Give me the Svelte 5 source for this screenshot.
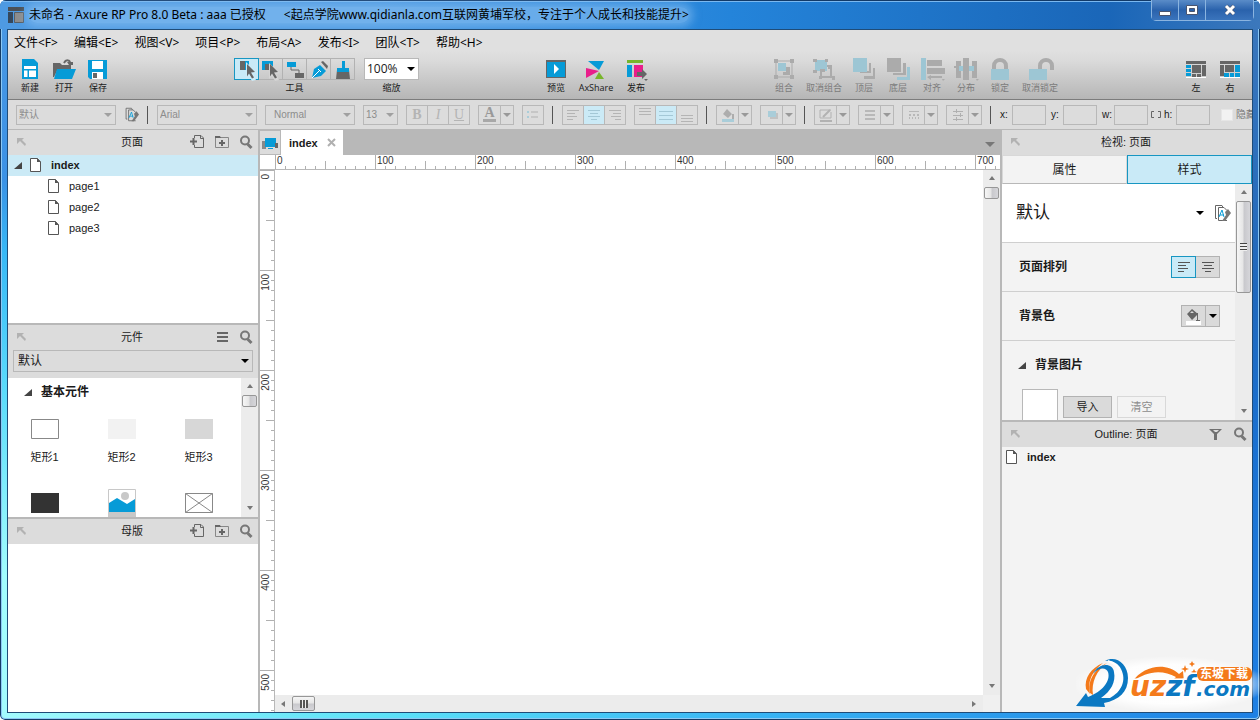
<script lang="ts">
	type Shape = [color: string, d: string, stroke?: number];

	const BLUE = '#069bd7';
	const DARK = '#666666';
	const GREY = '#ababab';
	const PALE = '#9dc6d4';
	const SOFT = '#a9cdd9';

	const icons: Record<string, Shape[]> = {
		new: [
			[BLUE, 'M4 1h12l4 4v16H4z'],
			['#fff', 'M6 8h12v3H6zM6 12.500h3.500v6.500H6zM11 12.500h7v6.500h-7z']
		],
		open: [
			[DARK, 'M1 5h7l2 2h9v4H6L2 19H1z'],
			[BLUE, 'M5 11h19l-4 10H2z'],
			[DARK, 'M12 5c2-4 6-3 6 0', 2],
			[DARK, 'M15 4h6v3h-4z']
		],
		save: [
			[BLUE, 'M2 2h19v19H4l-2-2z'],
			['#fff', 'M6 3h11v8H6zM6 14h11v7H6z'],
			[DARK, 'M7 15h4v5H7z']
		],
		select: [
			[DARK, 'M4 2h5v9H4z'],
			[BLUE, 'M9 2h4v9H9z'],
			['#cdebf7', 'M10 3l11 11-4 1 3 6-4 1-3-5-3 3z'],
			[DARK, 'M11 5l8 8-4 .5 3 5-2 1-3-5-2 3z']
		],
		contain: [
			[BLUE, 'M2 2h11v9H2z'],
			[DARK, 'M5 5h6v6H5z'],
			['#d4d4d4', 'M9 4l11 10-4 1 3 6-4 1-3-5-3 3z'],
			[DARK, 'M10 5l8 8-4 .5 3 5-2 1-3-5-2 3z']
		],
		connect: [
			[BLUE, 'M3 3h9v5H3z'],
			[DARK, 'M11 14h9v5h-9z'],
			[DARK, 'M7 8v3h8v3', 1]
		],
		pen: [
			[BLUE, 'M4 19l2-9 6-4 6 6-5 5z'],
			[DARK, 'M13 3l2-1 5 5-1 3z'],
			['#fff', 'M4 19l7-7M10 10l3 3', 1]
		],
		brush: [
			[DARK, 'M5 11h12l1 9H4z'],
			[BLUE, 'M10 2h3v7h4v4H5V9h5z']
		],
		preview: [
			[DARK, 'M2 2h20v18H2z'],
			[BLUE, 'M3 4h18v15H3z'],
			['#fff', 'M10 6l5 5-5 5z']
		],
		axshare: [
			[BLUE, 'M4 3h16l-5 9z'],
			['#e91e8b', 'M2 10l13 3L2 20z'],
			['#77b52b', 'M15 14l5 7h-9z']
		],
		publish: [
			['#77b52b', 'M3 2h16v3H3z'],
			[BLUE, 'M3 7h5v12H3z'],
			['#e91e8b', 'M10 7h9v12h-9z'],
			[DARK, 'M13 14h5v-3l5 5-5 5v-3h-5zM20 21h4l-2 2z']
		],
		group: [
			[GREY, 'M4 3h16v16H4z', 1],
			[GREY, 'M2 1h4v4H2zM18 1h4v4h-4zM2 17h4v4H2zM18 17h4v4h-4zM11 14h3v-5h4v8h-7z'],
			[PALE, 'M6 5h8v8H6z']
		],
		ungroup: [
			[PALE, 'M3 2h12v11H3z'],
			[GREY, 'M1 1h4v3H1zM13 1h3v3h-3zM1 12h4v3H1zM16 7h3v4h-3zM7 18h3v3H7zM20 18h3v4h-3zM8 11h5v3H8z'],
			[GREY, 'M15 8h4v11H9v-5', 2]
		],
		front: [
			[GREY, 'M17 5h2v10H8v-2h9zM21 10h2v11H12v-3h9z'],
			[PALE, 'M1 0h14v14H1z']
		],
		back: [
			[PALE, 'M21 9h3v13H11v-3h10z'],
			[GREY, 'M1 0h14v14H1zM17 5h3v12H7v-2h10z']
		],
		align: [
			[PALE, 'M1 0h5v22H1z'],
			[GREY, 'M7 2h15v6H7zM7 10h18v6H7zM7 19l4-2v1h11v2H11v2zM22 21h3l-2 2z']
		],
		distribute: [
			[GREY, 'M2 3h5v17H2zM9 0h6v22H9zM18 3h5v17h-5zM0 8h3v2H0zM22 21h3l-2 2z'],
			[PALE, 'M5 8h15v5H5z'],
			[GREY, 'M9 8h6v5H9z']
		],
		lock: [
			[GREY, 'M6 11V8c0-8 12-8 12 0v3', 4],
			[PALE, 'M3 11h18v11H3z']
		],
		unlock: [
			[GREY, 'M12 11V8c0-8 12-8 12 0v4', 4],
			[PALE, 'M1 11h18v11H1z']
		],
		paneLeft: [
			[DARK, 'M2 3h20v3H2zM8 7h9v8H8zM18 7h4v11h-4zM8 16h4v3H8zM13 16h4v3h-4z'],
			[BLUE, 'M2 7h5v3H2zM2 11h5v3H2zM2 15h5v3H2z'],
			['#fff', 'M2 19h20v1H2z']
		],
		paneRight: [
			[DARK, 'M2 3h20v3H2zM2 7h4v11H2zM7 7h9v7H7z'],
			[BLUE, 'M17 7h5v7h-5zM6 15h5v4H6zM12 15h4v4h-4zM17 15h5v4h-5z'],
			['#fff', 'M2 19h20v1H2z']
		],
		format: [
			[DARK, 'M4 14.500H2.500v-13H9l1 2', 1],
			[DARK, 'M14 16.500H5.500v-13H11l3 3', 1],
			['#777', 'M12 8l3-3 3 4-6 8h-3l4-6z'],
			[BLUE, 'M6 13l3-7 2 7M7 11h4', 1]
		],
		corner: [['#b2b2b2', 'M2 3h7L7 5l4 4-1 2-5-5-3 3z']],
		addPage: [
			[DARK, 'M4.500 4V1.500H11L13.500 4v9.500h-9V11', 1],
			[DARK, 'M10.500 2v2.500h3', 1],
			[DARK, 'M0 7.500h7M3.500 4v7', 2]
		],
		addFolder: [
			['#888', 'M1.500 3.500h13v10h-13z', 1],
			[DARK, 'M1 2h5l1 2H1zM7 6h2v2h2v2H9v2H7v-2H5V8h2z']
		],
		search: [
			['#777', 'M11 6.500a4 4 0 1 1-8 0a4 4 0 1 1 8 0z', 2],
			['#777', 'M9.500 10l4 4', 3]
		],
		menu: [['#666', 'M3 3h11v2H3zM3 7h11v2H3zM3 11h11v2H3z']],
		filter: [['#707070', 'M1 3h13L9 8v6H6V8zM5 4l2 2h2l2-2z']],
		page: [
			['#fff', 'M2 1h7l3 4v10H2z'],
			['#555', 'M1.500 1.500h7l3 3.500v9.500h-10z', 1],
			['#555', 'M8 1l4 4H8z']
		],
		fold: [['#444', 'M8 2v7H0z']],
		device: [
			['#888', 'M1 5h4v8H1z'],
			[BLUE, 'M4 2h11v9H4zM7 12h5v1H7z'],
			[DARK, 'M14 7h3v5h-3z']
		],
		list: [
			[SOFT, 'M2 4h2v2H2zM2 9h2v2H2z'],
			['#b0b0b0', 'M6 5h7M6 10h7', 1]
		],
		link: [['#666', 'M3 1.500H.500v6H3M7 1.500h2.500v6H7', 1]],
		left: [['currentColor', 'M2 3.500h12M2 6.500h8M2 9.500h10M2 12.500h6', 1]],
		center: [['currentColor', 'M2 3.500h12M4 6.500h8M2 9.500h12M5 12.500h6', 1]],
		right: [['currentColor', 'M2 3.500h12M6 6.500h8M4 9.500h10M8 12.500h6', 1]],
		top: [['currentColor', 'M2 1.500h12M2 4.500h12M2 7.500h12', 1]],
		middle: [['currentColor', 'M1 4.500h14M1 8.500h14M1 12.500h14', 1]],
		bottom: [['currentColor', 'M2 8.500h12M2 11.500h12M2 14.500h12', 1]],
		fill: [
			['#adadad', 'M3 7l4-5 5 5-4 4zM12 7h2v5h-2z'],
			[SOFT, 'M2 12h12v3H2z']
		],
		bucket: [
			[DARK, 'M2 6l5-5 6 5-6 6zM12 5h1v7h2v1h-4v-1h1z'],
			['#dadada', 'M5 5l2-2 2 2z'],
			['#fff', 'M1 13h15v4H1z']
		],
		shadow: [
			['#c2c2c2', 'M6 6h8v6H6z'],
			[SOFT, 'M4 4h8v6H4z']
		],
		line: [
			['#b2b2b2', 'M2 3h11M2 3v8h11V5', 1],
			['#b2b2b2', 'M5 10l7-7M2 14h12', 2]
		],
		weight: [['#b8b8b8', 'M3 4h10M3 8h10M3 12h10', 2]],
		dash: [
			['#b8b8b8', 'M3 4.500h10', 1],
			['#b8b8b8', 'M3 8h2M7 8h2M11 8h2M3 11h1M6 11h1M9 11h1M12 11h1', 2]
		],
		arrows: [['#b0b0b0', 'M3 4.500h10M3 8.500h10M3 12.500h10M6.500 2v4M10.500 6v4M6.500 10v4', 1]]
	};

	const menus = ['文件<F>', '编辑<E>', '视图<V>', '项目<P>', '布局<A>', '发布<I>', '团队<T>', '帮助<H>'];
	const fileTools = [
		['new', '新建'],
		['open', '打开'],
		['save', '保存']
	];
	const pointers = ['select', 'contain', 'connect', 'pen', 'brush'];
	const publishTools = [
		['preview', '预览'],
		['axshare', 'AxShare'],
		['publish', '发布']
	];
	const arrangeTools = [
		['group', '组合'],
		['ungroup', '取消组合'],
		['front', '顶层'],
		['back', '底层'],
		['align', '对齐'],
		['distribute', '分布'],
		['lock', '锁定'],
		['unlock', '取消锁定']
	];
	const paneTools = [
		['paneLeft', '左'],
		['paneRight', '右']
	];
	const widgets = [
		['box', '矩形1'],
		['light', '矩形2'],
		['mid', '矩形3'],
		['dark', ''],
		['image', ''],
		['placeholder', '']
	];

	let pointer = $state('select');
	let selected = $state('index');
	let inspectorTab = $state('样式');
	let pageAlign = $state('left');

	// rulers only carry as many ticks as the canvas has room for
	let rulerWidth = $state(0);
	let rulerHeight = $state(0);
	let ticksX = $derived(Array.from({ length: Math.ceil(rulerWidth / 10) }, (_, i) => i));
	let ticksY = $derived(Array.from({ length: Math.ceil(rulerHeight / 10) }, (_, i) => i));

	function tickLength(i: number) {
		if (i % 10 === 0) return 15;
		return i % 5 === 0 ? 9 : 4;
	}
</script>

{#snippet icon(name: string, w = 16, h = 16)}
	<svg width={w} height={h} viewBox="0 0 {w} {h}" aria-hidden="true">
		{#each icons[name] as [color, d, stroke]}
			{#if stroke}
				<path {d} fill="none" stroke={color} stroke-width={stroke} />
			{:else}
				<path {d} fill={color} />
			{/if}
		{/each}
	</svg>
{/snippet}

{#snippet tool([name, label]: string[], disabled = false)}
	<button class="tool" class:wide={label.length === 4} {disabled}>
		{@render icon(name, 24, 22)}
		<span>{label}</span>
	</button>
{/snippet}

{#snippet dropdown(value: string, size: string, label: string, disabled = false)}
	<span class="dropdown {size}" class:disabled>
		<select aria-label={label} {disabled}><option>{value}</option></select>
	</span>
{/snippet}

{#snippet split(name: string, label: string)}
	<span class="joined">
		<button class="cell main" aria-label={label} disabled>{@render icon(name)}</button>
		<button class="cell more" aria-label="{label}选项" disabled><i class="caret"></i></button>
	</span>
{/snippet}

{#snippet panelHeader(title: string, actions: string[])}
	<header class="panel-header">
		<button class="plain" aria-label="停靠">{@render icon('corner', 14, 14)}</button>
		<h2>{title}</h2>
		<div class="actions">
			{#each actions as action}
				<button class="plain" aria-label={action}>{@render icon(action)}</button>
			{/each}
		</div>
	</header>
{/snippet}

{#snippet scrollbar(thumb: string, horizontal = false)}
	<div class="scrollbar" class:horizontal>
		<i class="arrow back"></i>
		<i class="thumb {thumb}">{#if thumb !== 'short'}<b></b>{/if}</i>
		<i class="arrow forward"></i>
	</div>
{/snippet}

<div class="window">
	<div class="titlebar">
		<svg width="16" height="16" viewBox="0 0 16 16" aria-hidden="true">
			<path fill="#4b5056" d="M0 0h16v4H0z" />
			<path fill="#35485c" d="M0 5h5v11H0z" />
			<path fill="#8d8d8d" stroke="#5b5f63" d="M6.500 5.500h9v10h-9z" />
		</svg>
		<h1>
			<span>未命名 - Axure RP Pro 8.0 Beta : aaa 已授权</span>
			<span>&lt;起点学院www.qidianla.com互联网黄埔军校，专注于个人成长和技能提升&gt;</span>
		</h1>
		<div class="controls">
			<button aria-label="最小化"><svg width="12" height="12" viewBox="0 0 12 12"><path fill="#fff" stroke="#4a5570" d="M.5 7.500h11v4H.5z" /></svg></button>
			<button aria-label="最大化"><svg width="12" height="12" viewBox="0 0 12 12"><path fill="#fff" fill-rule="evenodd" stroke="#4a5570" d="M.5 1.500h11v9H.5zM3.500 4.500h5v3h-5z" /></svg></button>
			<button class="close" aria-label="关闭"><svg width="12" height="12" viewBox="0 0 12 12"><path stroke="#4a5570" stroke-width="4" d="M2 2l8 8M10 2l-8 8" /><path stroke="#fff" stroke-width="3" d="M2 2l8 8M10 2l-8 8" /></svg></button>
		</div>
	</div>

	<div class="client">
		<div class="top">
			<nav class="menubar">
				{#each menus as menu}
					<button class="plain">{menu}</button>
				{/each}
			</nav>
			<div class="toolbar">
				<div class="tools">
					{#each fileTools as item}{@render tool(item)}{/each}
				</div>
				<div class="labelled pointers">
					<div class="joined">
						{#each pointers as name}
							<button class="pointer" class:active={pointer === name} aria-label={name} onclick={() => (pointer = name)}>
								{@render icon(name, 22, 22)}
							</button>
						{/each}
					</div>
					<span>工具</span>
				</div>
				<div class="labelled zoom">
					{@render dropdown('100%', 'small', '缩放')}
					<span>缩放</span>
				</div>
				<div class="tools publish">
					{#each publishTools as item}{@render tool(item)}{/each}
				</div>
				<div class="tools arrange">
					{#each arrangeTools as item}{@render tool(item, true)}{/each}
				</div>
				<div class="tools panes">
					{#each paneTools as item}{@render tool(item)}{/each}
				</div>
			</div>
		</div>

		<div class="stylebar">
			{@render dropdown('默认', 'large', '样式', true)}
			<button class="plain" aria-label="样式管理">{@render icon('format', 18, 18)}</button>
			<i class="separator"></i>
			{@render dropdown('Arial', 'large', '字体', true)}
			{@render dropdown('Normal', 'medium', '字形', true)}
			{@render dropdown('13', 'tiny', '字号', true)}
			<span class="joined letters">
				<button class="cell" disabled><b>B</b></button>
				<button class="cell" disabled><em>I</em></button>
				<button class="cell" disabled><u>U</u></button>
			</span>
			<span class="joined letters">
				<button class="cell main color" aria-label="文字颜色" disabled><b>A</b></button>
				<button class="cell more" aria-label="颜色选项" disabled><i class="caret"></i></button>
			</span>
			<button class="cell" aria-label="项目符号" disabled>{@render icon('list')}</button>
			<i class="separator"></i>
			<span class="joined">
				{#each ['left', 'center', 'right'] as name}
					<button class="cell" class:on={name === 'center'} aria-label={name} disabled>{@render icon(name)}</button>
				{/each}
			</span>
			<span class="joined">
				{#each ['top', 'middle', 'bottom'] as name}
					<button class="cell" class:on={name === 'middle'} aria-label={name} disabled>{@render icon(name)}</button>
				{/each}
			</span>
			<i class="separator"></i>
			{@render split('fill', '填充')}
			{@render split('shadow', '阴影')}
			<i class="separator"></i>
			{@render split('line', '线条颜色')}
			{@render split('weight', '线宽')}
			{@render split('dash', '线型')}
			{@render split('arrows', '箭头')}
			<i class="separator"></i>
			<div class="coords">
				<label>x:<input disabled /></label>
				<label>y:<input disabled /></label>
				<label>w:<input disabled /></label>
				<span class="link">{@render icon('link', 10, 9)}</span>
				<label>h:<input disabled /></label>
			</div>
			<label class="hide"><input type="checkbox" disabled />隐藏</label>
		</div>

		<div class="workspace">
			<aside class="side">
				<section class="pages">
					{@render panelHeader('页面', ['addPage', 'addFolder', 'search'])}
					<button class="row root" class:selected={selected === 'index'} onclick={() => (selected = 'index')}>
						{@render icon('fold', 9, 10)}
						{@render icon('page', 13)}
						<span>index</span>
					</button>
					{#each ['page1', 'page2', 'page3'] as page}
						<button class="row child" class:selected={selected === page} onclick={() => (selected = page)}>
							{@render icon('page', 13)}
							<span>{page}</span>
						</button>
					{/each}
				</section>

				<section class="library">
					{@render panelHeader('元件', ['menu', 'search'])}
					<div class="library-select">{@render dropdown('默认', 'full', '元件库')}</div>
					<div class="scroll-area">
						<div class="library-content">
							<h3>{@render icon('fold', 9, 10)}基本元件</h3>
							<div class="widgets">
								{#each widgets as [kind, label]}
									<div class="widget">
										<svg width="28" height="30" viewBox="0 0 28 30" aria-hidden="true">
											{#if kind === 'box'}
												<path fill="#fff" stroke="#888" d="M.5 5.500h27v19H.5z" />
											{:else if kind === 'light'}
												<path fill="#f2f2f2" d="M0 5h28v20H0z" />
											{:else if kind === 'mid'}
												<path fill="#d7d7d7" d="M0 5h28v20H0z" />
											{:else if kind === 'dark'}
												<path fill="#333" d="M0 5h28v20H0z" />
											{:else if kind === 'image'}
												<path fill="#fff" stroke="#c8c8c8" d="M.5 1.500h27v28H.5z" />
												<path fill="#c8c8c8" d="M0 24h28v6H0z" />
												<circle cx="17" cy="8" r="4" fill="#c8c8c8" />
												<path fill={BLUE} d="M1 15l8-5 10 6 8-5v13H1z" />
											{:else}
												<path fill="#fff" stroke="#888" d="M.5 5.500h27v19H.5zM.5 5.500l27 19M27.500 5.500l-27 19" />
											{/if}
										</svg>
										{#if label}<span>{label}</span>{/if}
									</div>
								{/each}
							</div>
						</div>
						{@render scrollbar('short')}
					</div>
				</section>

				<section class="masters">
					{@render panelHeader('母版', ['addPage', 'addFolder', 'search'])}
				</section>
			</aside>

			<main class="editor">
				<div class="tabs">
					<button class="device" aria-label="自适应视图">{@render icon('device', 18, 14)}</button>
					<div class="tab">
						<span>index</span>
						<button class="plain" aria-label="关闭标签">
							<svg width="9" height="9" viewBox="0 0 9 9"><path stroke="#b0b0b0" stroke-width="2" d="M1 1l7 7M8 1L1 8" /></svg>
						</button>
					</div>
					<button class="plain tab-list" aria-label="标签列表"><i class="caret"></i></button>
				</div>
				<div class="canvas-grid">
					<div class="ruler-corner"></div>
					<div class="ruler-x" bind:clientWidth={rulerWidth}>
						<svg aria-hidden="true">
							{#each ticksX as i}
								<line x1={i * 10 + 0.5} x2={i * 10 + 0.5} y1={15 - tickLength(i)} y2="15" />
								{#if i % 10 === 0}<text x={i * 10 + 2} y="9">{i * 10}</text>{/if}
							{/each}
						</svg>
					</div>
					<div class="ruler-y" bind:clientHeight={rulerHeight}>
						<svg aria-hidden="true">
							{#each ticksY as i}
								<line y1={i * 10 + 0.5} y2={i * 10 + 0.5} x1={15 - tickLength(i)} x2="15" />
								{#if i % 10 === 0}
									<text text-anchor="end" transform="translate(9 {i * 10 + 4}) rotate(-90)">{i * 10}</text>
								{/if}
							{/each}
						</svg>
					</div>
					<div class="canvas"></div>
					{@render scrollbar('short')}
					<div class="bottom-scroll">{@render scrollbar('grip', true)}</div>
				</div>
			</main>

			<aside class="side inspector">
				<section class="inspect">
					{@render panelHeader('检视: 页面', [])}
					<div class="inspect-tabs">
						{#each ['属性', '样式'] as name}
							<button class:active={inspectorTab === name} onclick={() => (inspectorTab = name)}>{name}</button>
						{/each}
					</div>
					<div class="scroll-area">
						<div class="inspect-content">
							<div class="field preset">
								{@render dropdown('默认', 'title', '页面样式')}
								<button class="plain" aria-label="样式管理">{@render icon('format', 18, 18)}</button>
							</div>
							<div class="field">
								<h3>页面排列</h3>
								<span class="joined">
									{#each ['left', 'center'] as name}
										<button class="pointer" class:active={pageAlign === name} aria-label={name} onclick={() => (pageAlign = name)}>
											{@render icon(name)}
										</button>
									{/each}
								</span>
							</div>
							<div class="field">
								<h3>背景色</h3>
								<span class="joined">
									<button class="pointer" aria-label="背景色">{@render icon('bucket', 17, 17)}</button>
									<button class="pointer narrow" aria-label="颜色选项"><i class="caret black"></i></button>
								</span>
							</div>
							<div class="field last">
								<h3>{@render icon('fold', 9, 10)}背景图片</h3>
							</div>
							<div class="picture">
								<div class="thumbnail"></div>
								<button class="push">导入</button>
								<button class="push" disabled>清空</button>
							</div>
						</div>
						{@render scrollbar('long')}
					</div>
				</section>
				<section class="outline">
					{@render panelHeader('Outline: 页面', ['filter', 'search'])}
					<button class="row">{@render icon('page', 13)}<span>index</span></button>
				</section>
			</aside>
		</div>
	</div>

	<svg class="watermark" width="184" height="60" viewBox="0 0 184 60" role="img" aria-label="uzzf.com 东坡下载">
		<defs>
			<radialGradient id="halo">
				<stop offset="70%" stop-color="#fff" stop-opacity="0.9" />
				<stop offset="100%" stop-color="#fff" stop-opacity="0" />
			</radialGradient>
		</defs>
		<ellipse cx="94" cy="30" rx="98" ry="28" fill="url(#halo)" />
		<path fill="#f47a1b" d="M27 9C15 14 8 24 10 35l4 5C11 28 16 17 27 9z" />
		<path fill="#f47a1b" d="M31 9C21 16 15 28 17 41l-3-2C11 28 18 15 31 9z" />
		<path fill="#0b78c2" d="M17 20C23 8 37 9 38 18c2 10-3 19-13 26h9c11-6 17-17 11-29-3-6-9-9-16-8C39 1 52 9 52 24c0 14-9 22-24 25l1 4L0 52l10-13 2 4C26 38 35 27 32 18c-2-5-9-5-15 2z" />
		<path fill="none" stroke="#fff" stroke-width="2" d="M32 7c14 4 17 18 9 30" />
		<path fill="#f47a1b" d="M56 28c12-17 34-20 47-8l4-3 1 11-12-1 4-4C86 15 70 17 56 28z" />
		<path fill="#f47a1b" d="M109 11l1 3 3 1-3 1-1 3-1-3-3-1 3-1zM116 7l1 2 2 1-2 1-1 2-1-2-2-1 2-1zM118 15l1 2 2 1-2 1-1 2-1-2-2-1 2-1z" />
		<text class="brand orange" x="54" y="42">uz</text>
		<text class="brand blue" x="90" y="42">zf</text>
		<text class="brand blue small" x="120" y="42">.com</text>
		<rect x="121" y="13" width="55" height="14" rx="6" fill="#f47a1b" />
		<text class="tagline" x="124" y="24">东坡下载</text>
	</svg>
</div>

<style>
	:global(body) {
		margin: 0;
		font: 11px/14px 'Liberation Sans', 'Noto Sans CJK SC', sans-serif;
		color: #1a1a1a;
	}

	.window {
		position: relative;
		display: flex;
		flex-direction: column;
		min-height: 100vh;
		overflow: hidden;
		border-radius: 6px 6px 5px 5px;
		background:
			linear-gradient(90deg, #a4fbfd, #5ce2f8 30%, #37b4f4 60%, #1e80e4) bottom / 100% 8px no-repeat,
			linear-gradient(#4b98e2, #3b92e6 25%, #38b8f6 35%, #5cdcfb 55%, #a2fdfd 80%, #a4fbfd) left / 50% 100% no-repeat,
			linear-gradient(#3c78bc, #2068bc 40%, #1a70d0 60%, #1e80e4) right / 50% 100% no-repeat;
		box-shadow: inset 0 0 0 1px #143c66, inset 0 0 0 2px #8cc8f4;
	}

	button,
	select,
	input {
		font: inherit;
		color: inherit;
		margin: 0;
		padding: 0;
		border-radius: 0;
		box-sizing: border-box;
	}

	h1,
	h2,
	h3 {
		margin: 0;
		font-size: 11px;
		font-weight: normal;
	}

	svg {
		display: block;
		flex-shrink: 0;
	}

	.plain {
		border: 0;
		background: none;
	}

	.titlebar {
		display: flex;
		align-items: center;
		height: 29px;
		padding: 0 6px 0 8px;
		background: linear-gradient(90deg, #4e9ae2, #4c9ae2 30%, #2484da 58%, #1a66b8 88%, #3c78bc);
		box-shadow: inset 0 1px #123a68, inset 0 2px #7ab8f0;
	}

	h1 {
		display: flex;
		gap: 18px;
		margin-left: 5px;
		font: 12px/16px 'Noto Sans', 'Noto Sans CJK SC', sans-serif;
		color: #000;
		white-space: nowrap;
		background: rgba(150, 200, 245, 0.5);
		box-shadow: 0 0 8px 4px rgba(150, 200, 245, 0.5);
		border-radius: 8px;
	}

	.controls {
		display: flex;
		align-self: flex-start;
		margin-left: auto;
		border: 1px solid #8ab4e0;
		border-top: 0;
		border-radius: 0 0 5px 5px;
	}

	.controls button {
		display: grid;
		place-items: center;
		width: 27px;
		height: 20px;
		border: 0;
		border-right: 1px solid #8ab4e0;
		background: linear-gradient(#5a8cc8, #2a62ac 50%, #3a74bc);
	}

	.controls .close {
		width: 47px;
		border-right: 0;
	}

	.client {
		flex: 1;
		display: flex;
		flex-direction: column;
		margin: 1px 8px 8px;
		background: #dcdcdc;
		box-shadow: 0 0 0 1px #1f4c78;
	}

	.top {
		background: linear-gradient(#e0e0e0 30%, #dadada 45%, #b6b6b6);
		border-bottom: 1px solid #7c7c7c;
	}

	.menubar {
		display: flex;
		gap: 16px;
		padding: 1px 0 0 6px;
		font: 12px/23px 'Noto Sans', 'Noto Sans CJK SC', sans-serif;
		color: #000;
	}

	.menubar button {
		height: 23px;
	}

	.toolbar {
		display: flex;
		padding: 4px 5px;
		font: 9px/14px 'Open Sans', 'Noto Sans CJK SC', sans-serif;
		white-space: nowrap;
	}

	.tools {
		display: flex;
	}

	.tool {
		display: flex;
		flex-direction: column;
		align-items: center;
		gap: 1px;
		width: 34px;
		border: 0;
		background: none;
	}

	.tool svg {
		overflow: visible;
	}

	.tool:disabled {
		color: #7b7b7b;
	}

	.tool.wide {
		width: 46px;
	}

	.labelled {
		display: flex;
		flex-direction: column;
		align-items: center;
		gap: 1px;
	}

	.pointers {
		margin-left: 119px;
	}

	.zoom {
		margin-left: 9px;
	}

	.publish {
		margin-left: 117px;
	}

	.publish .tool {
		width: 40px;
	}

	.arrange {
		margin-left: 111px;
	}

	.panes {
		margin-left: auto;
	}

	.joined {
		display: flex;
		flex-shrink: 0;
	}

	.pointer {
		display: grid;
		place-items: center;
		width: 25px;
		height: 22px;
		border: 1px solid #b2b2b2;
		background: #dadada;
		color: #555;
	}

	.toolbar .pointer {
		background: none;
	}

	.pointer + .pointer {
		margin-left: -1px;
	}

	.pointer.active,
	.toolbar .pointer.active {
		border-color: #1796c2;
		background: #c9eaf7;
		z-index: 1;
	}

	.pointer.narrow {
		width: 15px;
	}

	.dropdown {
		display: grid;
		align-items: center;
		flex-shrink: 0;
		border: 1px solid #b8b8b8;
		box-sizing: border-box;
		height: 20px;
	}

	.dropdown select {
		grid-area: 1 / 1;
		width: 100%;
		height: 100%;
		padding-left: 2px;
		appearance: none;
		border: 0;
		background: none;
		opacity: 1;
	}

	.dropdown::after {
		content: '';
		grid-area: 1 / 1;
		justify-self: end;
		margin-right: 3px;
		border: 4px solid transparent;
		border-top-color: #000;
		border-bottom: 0;
		pointer-events: none;
	}

	.dropdown.disabled {
		color: #8c8c8c;
		font-size: 10px;
	}

	.dropdown.disabled::after {
		border-top-color: #a0a0a0;
	}

	.large {
		width: 100px;
	}

	.medium {
		width: 90px;
	}

	.medium select {
		padding-left: 8px;
	}

	.tiny {
		width: 35px;
	}

	.small {
		width: 55px;
		height: 22px;
		background: #fff;
		font-size: 12px;
	}

	.full {
		height: 22px;
		font-size: 12px;
	}

	.full select {
		padding-left: 4px;
	}

	.caret {
		border: 4px solid transparent;
		border-top-color: #999;
		border-bottom: 0;
	}

	.caret.black {
		border-top-color: #000;
	}

	.stylebar {
		display: flex;
		align-items: center;
		gap: 8px;
		height: 29px;
		padding-left: 8px;
		border-bottom: 1px solid #b8b8b8;
		overflow: hidden;
		white-space: nowrap;
	}

	.stylebar .plain svg {
		width: 15px;
		height: 15px;
	}

	.separator {
		flex-shrink: 0;
		width: 1px;
		height: 18px;
		margin-right: 1px;
		background: #555;
	}

	.cell {
		display: grid;
		place-items: center;
		flex-shrink: 0;
		width: 22px;
		height: 20px;
		border: 1px solid #b8b8b8;
		background: none;
		color: #b4b4b4;
	}

	.cell + .cell {
		margin-left: -1px;
	}

	.cell.main {
		width: 23px;
	}

	.cell.more {
		width: 14px;
	}

	.cell.on {
		background: #cbeaf6;
		color: #a4c8d6;
	}

	.letters {
		font: 14px/14px 'Liberation Serif', serif;
	}

	.cell.color b {
		width: 13px;
		border-bottom: 3px solid #a8a8a8;
		line-height: 12px;
		color: #999;
	}

	.coords {
		display: flex;
		align-items: center;
		gap: 5px;
		font-size: 10px;
	}

	.coords label {
		display: grid;
		grid-template-columns: 12px 34px;
		align-items: center;
	}

	.coords input {
		width: 34px;
		height: 20px;
		border: 1px solid #b8b8b8;
		background: none;
	}

	.link {
		margin: 0 -2px;
	}

	.hide {
		display: flex;
		align-items: center;
		gap: 3px;
		margin-left: 3px;
		font-size: 10px;
		color: #777;
	}

	.hide input {
		appearance: none;
		width: 12px;
		height: 12px;
		border: 1px solid #e6e6e6;
		background: #f2f2f2;
	}

	.workspace {
		flex: 1;
		display: grid;
		grid-template-columns: 250px minmax(0, 1fr) 250px;
		gap: 2px;
		background: #b8b8b8;
	}

	.side {
		display: flex;
		flex-direction: column;
		gap: 2px;
		min-width: 0;
	}

	.side section {
		background: #fff;
	}

	.pages {
		height: 193px;
	}

	.panel-header {
		display: grid;
		grid-template-columns: 1fr auto 1fr;
		align-items: center;
		height: 25px;
		padding: 0 4px 2px 7px;
		box-sizing: border-box;
		background: #dcdcdc;
	}

	.panel-header > .plain {
		justify-self: start;
	}

	.panel-header h2 {
		padding-right: 5px;
	}

	.actions {
		display: flex;
		justify-content: flex-end;
		gap: 8px;
	}

	.row {
		display: flex;
		align-items: center;
		gap: 9px;
		width: 100%;
		height: 21px;
		border: 0;
		padding: 0 0 2px 3px;
		background: none;
	}

	.row.root {
		gap: 6px;
		padding-left: 6px;
	}

	.row.root span {
		margin-left: 3px;
	}

	.row.child {
		padding-left: 39px;
	}

	.row.selected {
		background: #cbeaf6;
	}

	.row.root span,
	.outline .row span {
		font-weight: bold;
	}

	.library-select {
		padding: 0 5px 6px;
		background: #dcdcdc;
	}

	.scroll-area {
		display: grid;
		grid-template-columns: minmax(0, 1fr) 17px;
	}

	.library .scroll-area {
		height: 139px;
	}

	.library-content {
		overflow: hidden;
		height: 139px;
	}

	h3 {
		display: flex;
		align-items: center;
		gap: 8px;
		font-size: 12px;
		font-weight: bold;
	}

	.library-content h3 {
		padding: 7px 0 0 16px;
	}

	.widgets {
		display: grid;
		grid-template-columns: repeat(3, 73px);
		gap: 14px 4px;
		margin-top: 15px;
	}

	.widget {
		display: flex;
		flex-direction: column;
		align-items: center;
		gap: 6px;
		height: 60px;
	}

	.masters {
		flex: 1;
	}

	.scrollbar {
		display: flex;
		flex-direction: column;
		align-items: center;
		width: 17px;
		box-sizing: border-box;
		background: #ececec;
	}

	.arrow {
		margin: 6px 0 7px;
		border: 3px solid transparent;
	}

	.arrow.back {
		border-top: 0;
		border-bottom: 4px solid #777;
		margin-bottom: 5px;
	}

	.arrow.forward {
		margin-top: auto;
		border-bottom: 0;
		border-top: 4px solid #777;
	}

	.thumb {
		display: grid;
		place-items: center;
		width: 15px;
		box-sizing: border-box;
		margin-top: 2px;
		border: 1px solid #979797;
		border-radius: 2px;
		background: linear-gradient(90deg, #f6f6f6, #e6e6e6 45%, #c9c9cd 55%, #d6d6da);
	}

	.thumb.short {
		height: 12px;
	}

	.thumb.long {
		height: 92px;
	}

	.thumb b {
		width: 7px;
		height: 8px;
		background: repeating-linear-gradient(#444 0 1px, #eee 1px 3px);
	}

	.scrollbar.horizontal {
		flex-direction: row;
		width: auto;
		height: 17px;
	}

	.horizontal .arrow {
		margin: 0 7px 0 6px;
		border: 3px solid transparent;
	}

	.horizontal .arrow.back {
		border-left: 0;
		border-right: 4px solid #777;
	}

	.horizontal .arrow.forward {
		margin-left: auto;
		border-right: 0;
		border-left: 4px solid #777;
	}

	.thumb.grip {
		width: 23px;
		height: 15px;
		margin-top: 0;
		background: linear-gradient(#f6f6f6, #e6e6e6 45%, #c9c9cd 55%, #d6d6da);
	}

	.thumb.grip b {
		width: 8px;
		background: repeating-linear-gradient(90deg, #555 0 2px, #eee 2px 3px);
	}

	.editor {
		display: flex;
		flex-direction: column;
		min-width: 0;
	}

	.tabs {
		display: flex;
		height: 25px;
	}

	.device {
		display: grid;
		place-items: center;
		width: 21px;
		border: 1px solid #b8b8b8;
		border-left: 0;
		background: #dcdcdc;
	}

	.tab {
		display: flex;
		align-items: center;
		gap: 9px;
		padding: 0 7px 0 8px;
		background: #fff;
		font-weight: bold;
	}

	.tab-list {
		display: flex;
		align-items: center;
		margin-left: auto;
		padding: 4px 5px 0;
	}

	.tab-list .caret {
		border-width: 5px 5px 0;
		border-top-color: #777;
	}

	.canvas-grid {
		flex: 1;
		display: grid;
		grid-template-columns: 15px minmax(0, 1fr) 17px;
		grid-template-rows: 15px minmax(0, 1fr) 17px;
		background: #fff;
	}

	.ruler-corner {
		border-bottom: 1px solid #b8b8b8;
	}

	.ruler-x {
		grid-column: 2 / 4;
		overflow: hidden;
		border-bottom: 1px solid #b8b8b8;
	}

	.ruler-x svg {
		width: 100%;
		height: 14px;
	}

	.ruler-y {
		grid-row: 2 / 4;
		display: flex;
		overflow: hidden;
		border-right: 1px solid #b8b8b8;
	}

	.ruler-y svg {
		width: 14px;
		height: 100%;
	}

	line {
		stroke: #b0b0b0;
	}

	text {
		font-size: 10px;
		fill: #333;
	}

	.bottom-scroll {
		grid-column: 2 / 4;
		padding-right: 17px;
		background: #f0f0f0;
	}

	.inspector section {
		background: #f3f3f3;
	}

	.inspector .inspect {
		height: 290px;
		overflow: hidden;
	}

	.inspect-tabs {
		display: grid;
		grid-template-columns: 1fr 1fr;
		height: 29px;
		font-size: 12px;
	}

	.inspect-tabs button {
		border: 1px solid #d8d8d8;
		border-bottom-color: #b8b8b8;
		background: #f3f3f3;
	}

	.inspect-tabs .active {
		border-color: #1796c2;
		background: #c9eaf7;
	}

	.inspect .scroll-area {
		height: 236px;
	}

	.inspect-content {
		overflow: hidden;
	}

	.field {
		display: flex;
		align-items: center;
		justify-content: space-between;
		height: 48px;
		padding: 0 15px 0 17px;
		border-bottom: 1px solid #cfcfcf;
	}

	.field.preset {
		height: 58px;
		padding: 0 4px 0 10px;
		background: #fff;
	}

	.field.last {
		padding-left: 16px;
		border: 0;
	}

	.dropdown.title {
		flex: 1;
		height: 28px;
		margin-right: 6px;
		border: 0;
		font-size: 17px;
		line-height: 26px;
	}

	.title select {
		padding-left: 4px;
	}

	.picture {
		display: flex;
		align-items: center;
		gap: 5px;
		padding-left: 20px;
	}

	.thumbnail {
		width: 34px;
		height: 34px;
		border: 1px solid #b8b8b8;
		background: #fff;
	}

	.push {
		width: 49px;
		height: 22px;
		border: 1px solid #b2b2b2;
		background: #dadada;
	}

	.push:disabled {
		border-color: #d8d8d8;
		background: none;
		color: #8c8c8c;
	}

	.outline {
		flex: 1;
	}

	.watermark {
		position: absolute;
		right: 0;
		bottom: 6px;
	}

	.brand {
		font: italic bold 28px 'DejaVu Sans', sans-serif;
		stroke: #fff;
		stroke-width: 3px;
		paint-order: stroke;
	}

	.brand.small {
		font-size: 20px;
	}

	.orange {
		fill: #f47a1b;
	}

	.blue {
		fill: #0b78c2;
	}

	.tagline {
		font: bold 12px 'Noto Sans CJK SC', sans-serif;
		fill: #fff;
	}
</style>
